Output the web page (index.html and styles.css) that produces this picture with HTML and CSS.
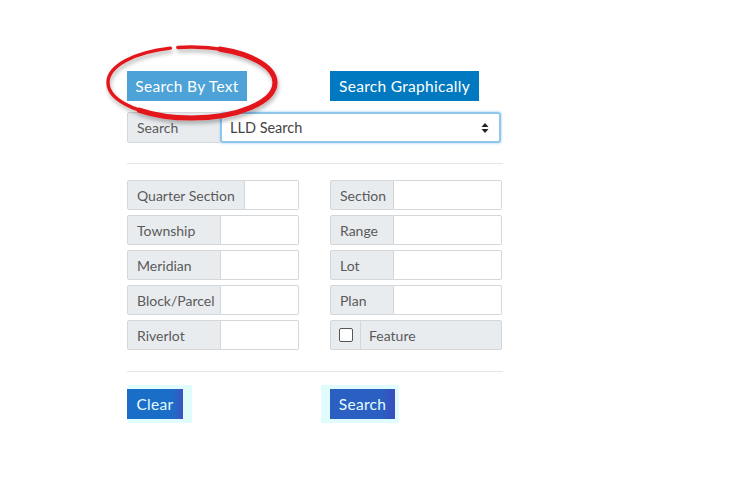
FILE: index.html
```html
<!DOCTYPE html>
<html>
<head>
<meta charset="utf-8">
<link rel="stylesheet" href="styles.css">
</head>
<body>
<div class="panel">
  <div class="tabs">
    <button class="btn btn-text">Search By Text</button>
    <button class="btn btn-graph">Search Graphically</button>
  </div>
  <div class="search-row">
    <span class="addon search-label">Search</span>
    <div class="select">
      <span>LLD Search</span>
      <svg class="caret" width="8" height="12" viewBox="0 0 8 12"><path d="M4 1 L7.5 5 H0.5 Z M4 11 L7.5 7 H0.5 Z" fill="#222"/></svg>
    </div>
  </div>
  <hr class="rule">
  <div class="grid">
    <div class="group"><span class="addon w-qs">Quarter Section</span><span class="field"></span></div>
    <div class="group"><span class="addon w-r">Section</span><span class="field"></span></div>
    <div class="group"><span class="addon w-l">Township</span><span class="field"></span></div>
    <div class="group"><span class="addon w-r">Range</span><span class="field"></span></div>
    <div class="group"><span class="addon w-l">Meridian</span><span class="field"></span></div>
    <div class="group"><span class="addon w-r">Lot</span><span class="field"></span></div>
    <div class="group"><span class="addon w-l">Block/Parcel</span><span class="field"></span></div>
    <div class="group"><span class="addon w-r">Plan</span><span class="field"></span></div>
    <div class="group"><span class="addon w-l">Riverlot</span><span class="field"></span></div>
    <div class="group feature"><span class="check-cell"><span class="box"></span></span><span class="feature-label">Feature</span></div>
  </div>
  <hr class="rule rule2">
  <div class="actions">
    <button class="btn act clear">Clear</button>
    <button class="btn act search">Search</button>
  </div>
  <svg class="ring" width="180" height="92" viewBox="0 0 180 92">
    <defs>
      <filter id="sh" x="-10%" y="-20%" width="120%" height="150%">
        <feDropShadow dx="1" dy="3" stdDeviation="2" flood-color="#000" flood-opacity="0.3"/>
      </filter>
    </defs>
    <g filter="url(#sh)" fill="none" stroke="#e3161b" stroke-linecap="round">
      <ellipse cx="85.5" cy="44.5" rx="83.5" ry="35.5" stroke-width="3.4" stroke-dasharray="270.3 7.4 120"/>
      <ellipse cx="85.5" cy="44.5" rx="83.5" ry="35.5" stroke-width="5.2" stroke-dasharray="150 170 70"/>
    </g>
  </svg>
</div>
</body>
</html>
```
FILE: styles.css
```css
html, body {
  margin: 0;
  padding: 0;
  background: #fff;
}
body {
  font-family: Lato, "Noto Sans", sans-serif;
  font-size: 14px;
  color: #555;
}
.panel {
  position: relative;
  width: 376px;
  padding: 71px 0 40px 127px;
}
.btn {
  font-family: inherit;
  border: 0;
  margin: 0;
  padding: 0;
  color: #fff;
  font-size: 15.5px;
  letter-spacing: 0.3px;
  height: 30px;
  cursor: pointer;
}
.tabs {
  display: flex;
  gap: 83px;
}
.btn-text {
  width: 120px;
  background: #4da2d7;
}
.btn-graph {
  width: 149px;
  background: #0079c1;
}
.search-row {
  display: flex;
  margin-top: 11px;
  height: 31px;
  width: 374px;
}
.addon {
  display: flex;
  align-items: center;
  box-sizing: border-box;
  padding-left: 9px;
  background: #e9ecef;
  border: 1px solid #d4d7da;
  border-radius: 2px 0 0 2px;
  color: #5a5a5a;
  white-space: nowrap;
  height: 100%;
}
.search-label {
  width: 93px;
}
.select {
  flex: 1;
  display: flex;
  align-items: center;
  justify-content: space-between;
  box-sizing: border-box;
  border: 2px solid #8fc6ee;
  border-radius: 3px;
  box-shadow: 0 0 2px 1px #cfe6f8;
  padding: 0 10px 0 8px;
  color: #444;
  background: #fff;
  font-size: 14.5px;
}
.caret {
  display: block;
}
.rule {
  border: 0;
  border-top: 1px solid #e3e5e8;
  width: 376px;
  margin: 20px 0 16px 0;
}
.grid {
  display: grid;
  grid-template-columns: 172px 172px;
  column-gap: 31px;
  row-gap: 5px;
}
.group {
  display: flex;
  height: 30px;
}
.field {
  flex: 1;
  box-sizing: border-box;
  border: 1px solid #d4d7da;
  border-left: 0;
  border-radius: 0 2px 2px 0;
  background: #fff;
}
.w-qs { width: 118px; }
.w-l { width: 94px; }
.w-r { width: 64px; }
.feature {
  box-sizing: border-box;
  background: #e9ecef;
  border: 1px solid #d4d7da;
  border-radius: 2px;
  align-items: center;
}
.check-cell {
  display: flex;
  align-items: center;
  justify-content: center;
  width: 29px;
  height: 100%;
  border-right: 1px solid #d4d7da;
}
.box {
  width: 12px;
  height: 12px;
  border: 1px solid #555;
  border-radius: 2px;
  background: #fff;
}
.feature-label {
  padding-left: 8px;
  color: #5a5a5a;
}
.rule2 {
  margin: 21px 0 17px 0;
}
.actions {
  display: flex;
  gap: 147px;
}
.act {
  color: #e3fdff;
}
.clear {
  width: 56px;
  background: linear-gradient(90deg, #1b6ec7 80%, #3b55c0);
  box-shadow: 5px 0 0 4px #e1fcfd;
}
.search {
  width: 65px;
  background: linear-gradient(90deg, #2b5fc2 80%, #3a4dbd);
  box-shadow: -5px 0 0 4px #e1fcfd, 0 0 0 4px #e1fcfd;
}
.ring {
  position: absolute;
  left: 106px;
  top: 38px;
  pointer-events: none;
}
```
